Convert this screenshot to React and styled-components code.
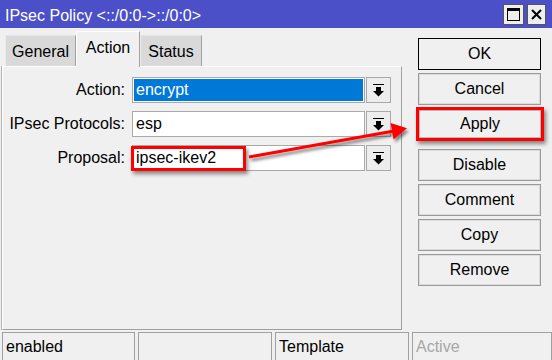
import React from 'react';
import styled, { createGlobalStyle, css } from 'styled-components';

const GlobalStyle = createGlobalStyle`
  html, body {
    margin: 0;
    padding: 0;
    background: #f0f0f0;
  }
  body {
    font-family: "Liberation Sans", Arial, sans-serif;
    font-size: 16px;
    color: #000;
  }
`;

const Window = styled.div`
  position: relative;
  width: 552px;
  height: 360px;
  overflow: hidden;
  background: #f0f0f0;
  display: flex;
  flex-direction: column;
`;

const TitleBar = styled.div`
  height: 28px;
  flex-shrink: 0;
  background: #4b4fc8;
  display: flex;
  align-items: center;
  justify-content: space-between;
  padding: 0 6px 0 5px;
`;

const Title = styled.span`
  color: #fff;
  font-size: 16px;
  padding-top: 3px;
`;

const TitleButtons = styled.div`
  display: flex;
  gap: 3px;
  align-self: flex-start;
  margin-top: 4px;
`;

const TitleButton = styled.div`
  width: ${(p) => p.$w}px;
  height: 21px;
  box-sizing: border-box;
  border: 1px solid #555;
  background: #eeeeee;
  display: flex;
  align-items: center;
  justify-content: center;
`;

const Body = styled.div`
  flex: 1;
  display: flex;
  min-height: 0;
`;

const LeftPane = styled.div`
  width: 400px;
  margin-left: 2px;
  padding: 3px 0 2px;
  display: flex;
  flex-direction: column;
`;

const TabStrip = styled.div`
  height: 35px;
  display: flex;
  align-items: flex-end;
  padding-left: 3px;
  position: relative;
  z-index: 1;
`;

const Tab = styled.div`
  box-sizing: border-box;
  width: ${(p) => p.$w}px;
  height: 31px;
  display: flex;
  align-items: center;
  justify-content: center;
  background: #d9d9d9;
  border-left: 1px solid #ececec;
  border-right: 1px solid #a0a0a0;
  border-top: 1px solid #e4e4e4;
  padding-top: 2px;

  ${(p) =>
    p.$active &&
    css`
      height: 36px;
      margin-bottom: -1px;
      padding: 0 0 3px;
      background: #f0f0f0;
      border-left: 1px solid #fff;
      border-top: 1px solid #fff;
    `}
`;

const Panel = styled.div`
  flex: 1;
  box-sizing: border-box;
  border-top: 1px solid #fff;
  border-left: 1px solid #fff;
  border-right: 1px solid #a0a0a0;
  border-bottom: 1px solid #a0a0a0;
  box-shadow: -1px 0 0 #b4b4b4;
  padding-top: 10px;
  display: flex;
  flex-direction: column;
  gap: 8px;
`;

const FormRow = styled.div`
  display: flex;
  align-items: stretch;
  height: 26px;
`;

const Label = styled.div`
  width: 122px;
  margin-right: 7px;
  text-align: right;
  display: flex;
  align-items: center;
  justify-content: flex-end;
`;

const Field = styled.div`
  position: relative;
  width: 233px;
  box-sizing: border-box;
  border: 1px solid #a9a9a9;
  background: #fff;
  padding-left: 3px;
  display: flex;
  align-items: center;

  ${(p) =>
    p.$selected &&
    css`
      background: #0078d7;
      color: #fff;
      box-shadow: inset 0 0 0 1px #fff;
    `}
`;

const HighlightBox = styled.div`
  position: absolute;
  left: -2px;
  top: 0;
  width: 115px;
  height: 25px;
  box-sizing: border-box;
  border: 3px solid #ff0000;
  box-shadow: 2px 3px 4px rgba(0, 0, 0, 0.45);
  pointer-events: none;
`;

const DropButton = styled.div`
  width: 25px;
  margin-left: 1px;
  box-sizing: border-box;
  border: 1px solid #a9a9a9;
  background: #ededed;
  display: flex;
  align-items: center;
  justify-content: center;
`;

const ButtonColumn = styled.div`
  width: 123px;
  margin-left: 16px;
  padding-top: 10px;
  display: flex;
  flex-direction: column;
  gap: 3px;
`;

const Button = styled.div`
  height: 32px;
  box-sizing: border-box;
  border: 1px solid #9a9a9a;
  box-shadow: inset 0 0 0 1px #dcdcdc;
  background: #f0f0f0;
  display: flex;
  align-items: center;
  justify-content: center;

  ${(p) =>
    p.$default &&
    css`
      border-color: #000;
      box-shadow: none;
    `}

  ${(p) =>
    p.$highlight &&
    css`
      height: 34px;
      margin: -1px -3px 5px -2px;
      border: 3px solid #ff0000;
      box-shadow: inset 0 0 0 1px #b8b8b8, 2px 3px 4px rgba(0, 0, 0, 0.45);
    `}
`;

const StatusBar = styled.div`
  height: 28px;
  flex-shrink: 0;
  display: flex;
  gap: 3px;
  padding-left: 2px;
`;

const StatusCell = styled.div`
  width: ${(p) => (p.$w ? `${p.$w}px` : 'auto')};
  flex: ${(p) => (p.$w ? 'none' : '1')};
  box-sizing: border-box;
  border: 1px solid #a0a0a0;
  border-bottom: none;
  padding-left: 3px;
  display: flex;
  align-items: center;
  color: ${(p) => (p.$dim ? '#a6a6a6' : '#000')};
`;

const Annotation = styled.svg`
  position: absolute;
  left: 0;
  top: 0;
  pointer-events: none;
  z-index: 5;
`;

const DropIcon = () => (
  <svg width="11" height="13" viewBox="0 0 11 13">
    <rect x="0" y="0" width="11" height="1" fill="#000" />
    <rect x="3" y="3" width="5" height="4" fill="#000" />
    <polygon points="0,7 11,7 5.5,12.5" fill="#000" />
  </svg>
);

const MaxIcon = () => (
  <svg width="13" height="13" viewBox="0 0 13 13">
    <rect x="0.5" y="0.5" width="12" height="12" fill="none" stroke="#000" />
    <rect x="0" y="0" width="13" height="3" fill="#000" />
  </svg>
);

const CloseIcon = () => (
  <svg width="11" height="11" viewBox="0 0 11 11">
    <path d="M1 1 L10 10 M10 1 L1 10" stroke="#000" strokeWidth="2" />
  </svg>
);

const tabs = [
  { name: 'General', w: 71 },
  { name: 'Action', w: 64, active: true },
  { name: 'Status', w: 62 },
];

const fields = [
  { label: 'Action:', value: 'encrypt', selected: true },
  { label: 'IPsec Protocols:', value: 'esp' },
  { label: 'Proposal:', value: 'ipsec-ikev2', marked: true },
];

const App = () => {
  return (
    <>
      <GlobalStyle />
      <Window>
        <TitleBar>
          <Title>IPsec Policy &lt;::/0:0-&gt;::/0:0&gt;</Title>
          <TitleButtons>
            <TitleButton $w={21}>
              <MaxIcon />
            </TitleButton>
            <TitleButton $w={19}>
              <CloseIcon />
            </TitleButton>
          </TitleButtons>
        </TitleBar>

        <Body>
          <LeftPane>
            <TabStrip>
              {tabs.map((t) => (
                <Tab key={t.name} $w={t.w} $active={t.active}>
                  {t.name}
                </Tab>
              ))}
            </TabStrip>
            <Panel>
              {fields.map((f) => (
                <FormRow key={f.label}>
                  <Label>{f.label}</Label>
                  <Field $selected={f.selected}>
                    {f.marked && <HighlightBox />}
                    {f.value}
                  </Field>
                  <DropButton>
                    <DropIcon />
                  </DropButton>
                </FormRow>
              ))}
            </Panel>
          </LeftPane>

          <ButtonColumn>
            <Button $default>OK</Button>
            <Button>Cancel</Button>
            <Button $highlight>Apply</Button>
            <Button>Disable</Button>
            <Button>Comment</Button>
            <Button>Copy</Button>
            <Button>Remove</Button>
          </ButtonColumn>
        </Body>

        <StatusBar>
          <StatusCell $w={133}>enabled</StatusCell>
          <StatusCell $w={134}></StatusCell>
          <StatusCell $w={134}>Template</StatusCell>
          <StatusCell $dim>Active</StatusCell>
        </StatusBar>

        {/* red arrow drawn over the dialog */}
        <Annotation width="552" height="360" viewBox="0 0 552 360">
          <defs>
            <filter id="arrowShadow" x="-10%" y="-50%" width="120%" height="200%">
              <feDropShadow dx="2" dy="3" stdDeviation="1.5" floodColor="#000" floodOpacity="0.45" />
            </filter>
          </defs>
          <g filter="url(#arrowShadow)">
            <line x1="249" y1="157" x2="394" y2="131" stroke="#ff0000" strokeWidth="3" />
            <polygon points="390.5,123 407,128.3 393.5,139.5" fill="#ff0000" />
          </g>
        </Annotation>
      </Window>
    </>
  );
};

export default App;
